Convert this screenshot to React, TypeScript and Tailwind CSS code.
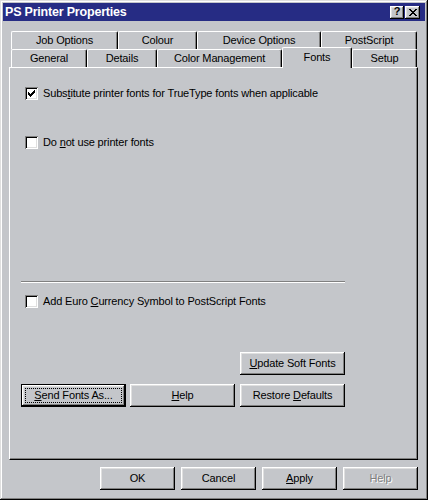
import React from "react";

const raised =
  "shadow-[inset_-1px_-1px_#000,inset_1px_1px_#fff,inset_-2px_-2px_#808080,inset_2px_2px_#dfdfdf]";

function U({ children }: { children: React.ReactNode }) {
  return <span className="underline underline-offset-[1px]">{children}</span>;
}

function Btn({
  children,
  w,
  def,
  disabled,
  className = "",
}: {
  children: React.ReactNode;
  w: string;
  def?: boolean;
  disabled?: boolean;
  className?: string;
}) {
  if (def) {
    return (
      <div className={`${w} h-[23px] border border-black ${className}`}>
        <div className={`relative flex h-full w-full items-center justify-center ${raised}`}>
          <span>{children}</span>
          <div className="absolute inset-[3px] border border-dotted border-black" />
        </div>
      </div>
    );
  }
  return (
    <div
      className={`${w} h-[23px] flex items-center justify-center ${raised} ${
        disabled ? "text-[#808080] [text-shadow:1px_1px_0_#fff]" : ""
      } ${className}`}
    >
      <span>{children}</span>
    </div>
  );
}

function CheckBox({ checked }: { checked?: boolean }) {
  const pts = [
    [6, 0],
    [5, 1], [6, 1],
    [0, 2], [4, 2], [5, 2], [6, 2],
    [0, 3], [1, 3], [3, 3], [4, 3], [5, 3],
    [0, 4], [1, 4], [2, 4], [3, 4], [4, 4],
    [1, 5], [2, 5], [3, 5],
    [2, 6],
  ];
  return (
    <div className="w-[13px] h-[13px] shrink-0 bg-white shadow-[inset_1px_1px_#808080,inset_-1px_-1px_#fff,inset_2px_2px_#000,inset_-2px_-2px_#dfdfdf] relative">
      {checked && (
        <svg width="13" height="13" viewBox="0 0 13 13" shapeRendering="crispEdges" className="absolute left-0 top-0">
          {pts.map(([x, y], i) => (
            <rect key={i} x={x + 3} y={y + 3} width="1" height="1" fill="#000" />
          ))}
        </svg>
      )}
    </div>
  );
}

function Tab({ label, w, selected }: { label: string; w: string; selected?: boolean }) {
  if (selected) {
    return (
      <div
        className={`${w} relative z-10 h-[21px] -mb-[1px] flex items-center justify-center pb-[1px] bg-[#c4c6ca] border-l border-t border-white border-r border-r-black rounded-t-[2px] shadow-[inset_-1px_0_#808080]`}
      >
        {label}
      </div>
    );
  }
  return (
    <div
      className={`${w} h-[18px] flex items-center justify-center bg-[#c4c6ca] border-l border-t border-white border-r border-r-black rounded-t-[2px] shadow-[inset_-1px_0_#808080]`}
    >
      {label}
    </div>
  );
}

function XGlyph() {
  const rows = [
    "##....##",
    ".##..##.",
    "..####..",
    "...##...",
    "..####..",
    ".##..##.",
    "##....##",
  ];
  return (
    <svg width="8" height="7" viewBox="0 0 8 7" shapeRendering="crispEdges">
      {rows.flatMap((r, y) =>
        r.split("").map((c, x) => (c === "#" ? <rect key={`${x}-${y}`} x={x} y={y} width="1" height="1" fill="#000" /> : null))
      )}
    </svg>
  );
}

export default function App() {
  return (
    <div className="w-[428px] h-[500px] bg-[#c4c6ca] p-[3px] shadow-[inset_-1px_-1px_#000,inset_1px_1px_#dfdfdf,inset_-2px_-2px_#808080,inset_2px_2px_#fff] font-['Liberation_Sans',Arial,sans-serif] text-[11px] tracking-[-0.15px] text-black leading-[13px] flex flex-col">
      {/* Title bar */}
      <div className="h-[18px] bg-[#262c84] flex items-center justify-between pl-[2px] pr-[5px]">
        <span className="text-white font-bold text-[12.5px] tracking-[-0.2px]">PS Printer Properties</span>
        <div className="flex items-center gap-[1px]">
          <div className={`w-[14px] h-[13px] bg-[#c4c6ca] flex items-center justify-center pb-[1px] ${raised}`}>
            <span className="font-bold text-[11px] leading-[11px] tracking-normal text-black">?</span>
          </div>
          <div className={`w-[15px] h-[13px] bg-[#c4c6ca] flex items-center justify-center ${raised}`}>
            <XGlyph />
          </div>
        </div>
      </div>

      {/* Content */}
      <div className="flex flex-col pl-[6px] pr-[7px] pt-[10px]">
        {/* Back tab row */}
        <div className="flex ml-[2px]">
          <Tab label="Job Options" w="w-[107px]" />
          <Tab label="Colour" w="w-[79px]" />
          <Tab label="Device Options" w="w-[124px]" />
          <Tab label="PostScript" w="w-[96px]" />
        </div>
        {/* Front tab row */}
        <div className="flex items-end ml-[2px] -mt-[2px]">
          <Tab label="General" w="w-[76px]" />
          <Tab label="Details" w="w-[70px]" />
          <Tab label="Color Management" w="w-[125px]" />
          <Tab label="Fonts" w="w-[70px]" selected />
          <Tab label="Setup" w="w-[65px]" />
        </div>

        {/* Panel */}
        <div className="h-[393px] border-l border-t border-white border-r border-b border-r-black border-b-black shadow-[inset_-1px_-1px_#808080] flex flex-col pl-[11px]">
          <div className="mt-[19px] ml-[4px] flex items-center h-[13px]">
            <CheckBox checked />
            <span className="ml-[5px]">
              Subs<U>t</U>itute printer fonts for TrueType fonts when applicable
            </span>
          </div>
          <div className="mt-[36px] ml-[4px] flex items-center h-[13px]">
            <CheckBox />
            <span className="ml-[5px]">
              Do <U>n</U>ot use printer fonts
            </span>
          </div>
          <div className="mt-[132px] w-[324px] h-[2px] border-t border-[#808080] border-b border-b-white" />
          <div className="mt-[12px] ml-[4px] flex items-center h-[13px]">
            <CheckBox />
            <span className="ml-[5px]">
              Add Euro <U>C</U>urrency Symbol to PostScript Fonts
            </span>
          </div>
          <div className="mt-[44px] flex">
            <Btn w="w-[105px]" className="ml-[219px]">
              <U>U</U>pdate Soft Fonts
            </Btn>
          </div>
          <div className="mt-[9px] flex">
            <Btn w="w-[105px]" def>
              <U>S</U>end Fonts As...
            </Btn>
            <Btn w="w-[105px]" className="ml-[4px]">
              <U>H</U>elp
            </Btn>
            <Btn w="w-[105px]" className="ml-[5px]">
              Restore <U>D</U>efaults
            </Btn>
          </div>
        </div>

        {/* Bottom buttons */}
        <div className="mt-[7px] flex justify-end gap-[6px]">
          <Btn w="w-[75px]">OK</Btn>
          <Btn w="w-[75px]">Cancel</Btn>
          <Btn w="w-[75px]">
            <U>A</U>pply
          </Btn>
          <Btn w="w-[75px]" disabled>
            Help
          </Btn>
        </div>
      </div>
    </div>
  );
}
